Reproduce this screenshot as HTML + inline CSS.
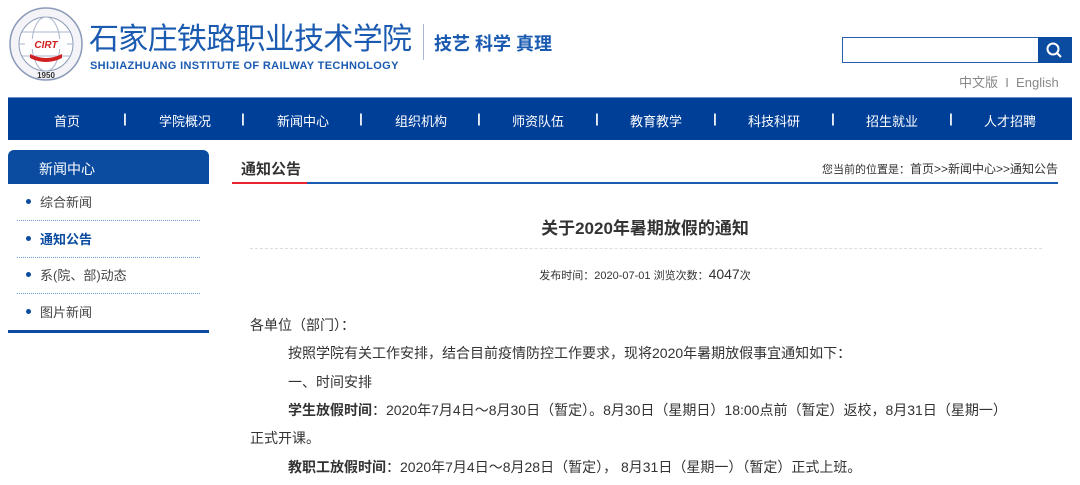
<!DOCTYPE html>
<html><head><meta charset="utf-8"><style>
*{margin:0;padding:0;box-sizing:border-box}
body{width:1080px;height:485px;overflow:hidden;background:#fff;font-family:"Liberation Sans","Noto Sans CJK SC",sans-serif;color:#333;position:relative}
.a{position:absolute;white-space:nowrap}
.nav{position:absolute;left:8px;top:97px;width:1064px;height:43px;background:#003f98;border-top:1px solid #6b8fc8}
.nav span{position:absolute;top:13px;color:#fff;font-size:13px;transform:translateX(-50%)}
.nav span.s{font-weight:bold}
.side{position:absolute;left:8px;top:150px;width:201px;height:34px;background:#0b4ca0;border-radius:6px 6px 0 0;color:#fff;font-size:14px;padding:9px 0 0 31px}
.li{position:absolute;left:17px;width:183px;height:37px;border-bottom:1px dotted #6f9bd6;font-size:13px;padding:8px 0 0 23px;color:#444}
.li:before{content:"";position:absolute;left:9px;top:15px;width:5px;height:5px;border-radius:50%;background:#0b4ca0}
p.t{position:absolute;font-size:14px;color:#333;white-space:nowrap}
</style></head><body>
<svg class="a" style="left:8px;top:6px" width="76" height="76" viewBox="0 0 76 76">
<circle cx="38" cy="38" r="36" fill="#f4f4f8" stroke="#8a9ab8" stroke-width="1.5"/>
<circle cx="38" cy="38" r="27" fill="#fff" stroke="#8a9ab8" stroke-width="1"/>
<ellipse cx="38" cy="38" rx="14" ry="27" fill="none" stroke="#aab4cc"/>
<line x1="11" y1="38" x2="65" y2="38" stroke="#aab4cc"/><line x1="14" y1="26" x2="62" y2="26" stroke="#aab4cc"/><line x1="14" y1="50" x2="62" y2="50" stroke="#aab4cc"/>
<rect x="17" y="33" width="42" height="10" fill="#fff"/>
<text x="38" y="42" font-size="10" font-weight="bold" font-style="italic" fill="#d02020" text-anchor="middle" font-family="Liberation Sans">CIRT</text>
<path d="M22 48 Q38 56 54 48 L54 52 Q38 60 22 52Z" fill="#d02020"/>
<text x="38" y="72" font-size="8" font-weight="bold" fill="#333" text-anchor="middle" font-family="Liberation Sans">1950</text>
</svg>
<div class="a" style="left:89px;top:22px;font-size:30px;color:#1a5ab0;letter-spacing:-0.7px;line-height:36px">石家庄铁路职业技术学院</div>
<div class="a" style="left:90px;top:60px;font-size:11px;font-weight:bold;color:#1a5ab0;letter-spacing:0.35px">SHIJIAZHUANG INSTITUTE OF RAILWAY TECHNOLOGY</div>
<div class="a" style="left:423px;top:24px;width:1px;height:36px;background:#aab8d0"></div>
<div class="a" style="left:434px;top:30px;font-size:18px;font-weight:bold;color:#1a5ab0">技艺 科学 真理</div>
<div class="a" style="left:842px;top:37px;width:197px;height:26px;border:1px solid #2a5eb0"></div>
<div class="a" style="left:1038px;top:37px;width:34px;height:26px;background:#0b4ca0"></div>
<svg class="a" style="left:1045px;top:41px" width="18" height="18"><circle cx="8" cy="8" r="5.5" fill="none" stroke="#fff" stroke-width="2"/><line x1="12" y1="12" x2="16" y2="16" stroke="#fff" stroke-width="2"/></svg>
<div class="a" style="left:959px;top:72px;font-size:13px;color:#888">中文版 &nbsp;I&nbsp; English</div>
<div class="nav">
<span style="left:59px">首页</span><span class="s" style="left:117px">|</span>
<span style="left:177px">学院概况</span><span class="s" style="left:235px">|</span>
<span style="left:295px">新闻中心</span><span class="s" style="left:353px">|</span>
<span style="left:413px">组织机构</span><span class="s" style="left:471px">|</span>
<span style="left:530px">师资队伍</span><span class="s" style="left:589px">|</span>
<span style="left:648px">教育教学</span><span class="s" style="left:707px">|</span>
<span style="left:766px">科技科研</span><span class="s" style="left:825px">|</span>
<span style="left:884px">招生就业</span><span class="s" style="left:943px">|</span>
<span style="left:1002px">人才招聘</span>
</div>
<div class="side">新闻中心</div>
<div class="li" style="top:184px">综合新闻</div>
<div class="li" style="top:221px;color:#0b4ca0;font-weight:bold">通知公告</div>
<div class="li" style="top:257px">系(院、部)动态</div>
<div class="li" style="top:294px">图片新闻</div>
<div class="a" style="left:8px;top:330px;width:201px;height:3px;background:#0b4ca0"></div>
<div class="a" style="left:241px;top:158px;font-size:15px;font-weight:bold;color:#333">通知公告</div>
<div class="a" style="left:232px;top:182px;width:826px;height:2px;background:#1a5ab0"></div>
<div class="a" style="left:232px;top:182px;width:75px;height:2px;background:#e8242c"></div>
<div class="a" style="right:22px;top:160px;font-size:12px;color:#333"><span style="font-size:11px">您当前的位置是：</span>首页&gt;&gt;新闻中心&gt;&gt;通知公告</div>
<div class="a" style="left:232px;top:214px;width:826px;text-align:center;font-size:17px;font-weight:bold;color:#333">关于2020年暑期放假的通知</div>
<div class="a" style="left:250px;top:248px;width:792px;border-top:1px dashed #ddd"></div>
<div class="a" style="left:232px;top:266px;width:826px;text-align:center;font-size:11px;color:#333">发布时间：2020-07-01 浏览次数：<span style="font-size:14px">4047</span>次</div>
<p class="t" style="left:250px;top:315px">各单位（部门）：</p>
<p class="t" style="left:288px;top:343px">按照学院有关工作安排，结合目前疫情防控工作要求，现将2020年暑期放假事宜通知如下：</p>
<p class="t" style="left:288px;top:372px">一、时间安排</p>
<p class="t" style="left:288px;top:400px"><b>学生放假时间</b>：2020年7月4日～8月30日（暂定）。8月30日（星期日）18:00点前（暂定）返校，8月31日（星期一）</p>
<p class="t" style="left:250px;top:428px">正式开课。</p>
<p class="t" style="left:288px;top:457px"><b>教职工放假时间</b>：2020年7月4日～8月28日（暂定）， 8月31日（星期一）（暂定）正式上班。</p>
</body></html>
